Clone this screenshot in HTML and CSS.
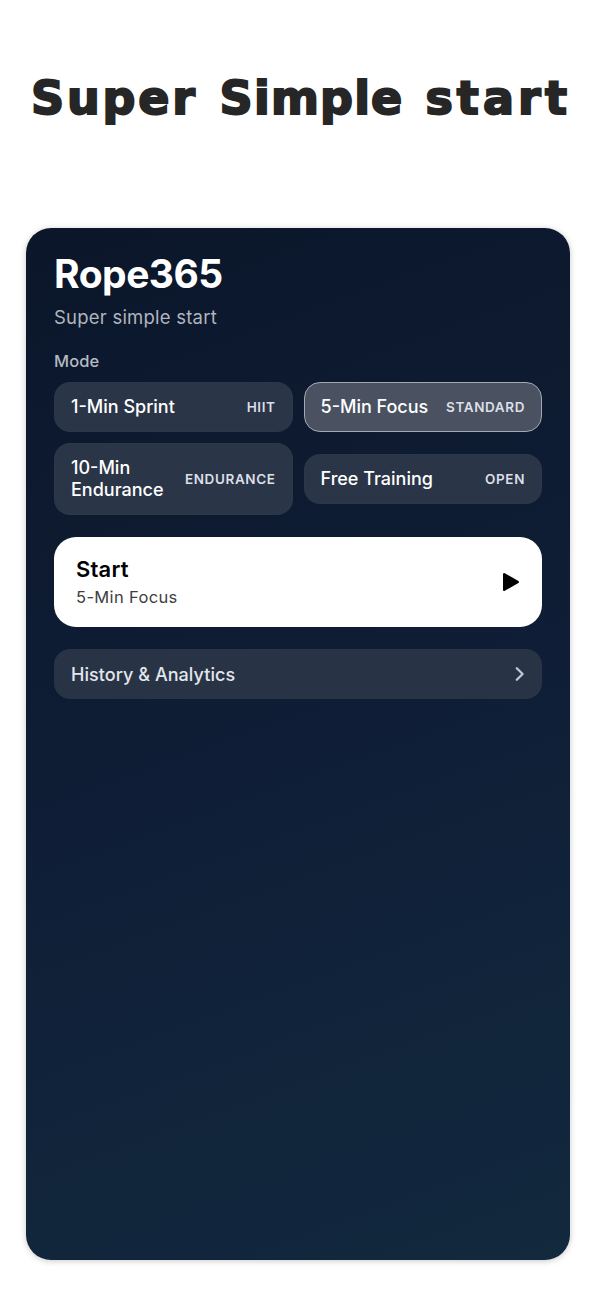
FILE: index.html
```html
<!DOCTYPE html>
<html lang="en">
<head>
    <meta charset="UTF-8">
    <meta name="viewport" content="width=device-width, initial-scale=1.0">
    <title>Rope365</title>
    <link rel="stylesheet" href="styles.css">
</head>
<body>

<header class="headline">
    <span class="word-wide">Super</span> <span class="word">Simple</span> <span class="word-widest">start</span>
</header>

<main class="screen">
    <h1>Rope365</h1>
    <p class="subtitle">Super simple start</p>

    <h2>Mode</h2>
    <div class="modes">
        <button class="mode"><span class="mode-name">1-Min Sprint</span><span class="tag">HIIT</span></button>
        <button class="mode selected"><span class="mode-name">5-Min Focus</span><span class="tag">STANDARD</span></button>
        <button class="mode tall"><span class="mode-name">10-Min<br>Endurance</span><span class="tag">ENDURANCE</span></button>
        <button class="mode"><span class="mode-name">Free Training</span><span class="tag">OPEN</span></button>
    </div>

    <button class="start">
        <span class="start-text">
            <span class="start-title">Start</span>
            <span class="start-mode">5-Min Focus</span>
        </span>
        <svg class="play" width="17" height="18" viewBox="0 0 17 18">
            <path d="M1.2 1.2L14.8 9L1.2 16.8Z" fill="#000" stroke="#000" stroke-width="2.4" stroke-linejoin="round"/>
        </svg>
    </button>

    <button class="history">
        <span>History &amp; Analytics</span>
        <svg width="10" height="16" viewBox="0 0 10 16">
            <path d="M1.8 2.2L7.6 8L1.8 13.8" fill="none" stroke="#c3c8d0" stroke-width="2.3" stroke-linecap="round" stroke-linejoin="round"/>
        </svg>
    </button>
</main>

</body>
</html>
```
FILE: styles.css
```css
* {
    box-sizing: border-box;
}

body {
    margin: 0;
    height: 1290px;
    background-color: #fff;
    font-family: Inter, "Liberation Sans", sans-serif;
    overflow: hidden;
}

.headline {
    display: flex;
    justify-content: space-between;
    height: 228px;
    padding: 70px 25px 0 31px;
    font-family: "DejaVu Sans", sans-serif;
    font-weight: bold;
    font-size: 46px;
    line-height: 56px;
    white-space: nowrap;
    color: #262626;
    -webkit-text-stroke: 2px #262626;
}

.word {
    letter-spacing: 1.2px;
}

.word-wide {
    letter-spacing: 2.8px;
}

.word-widest {
    letter-spacing: 4.1px;
}

.screen {
    display: flex;
    flex-direction: column;
    width: 544px;
    height: 1032px;
    margin: 0 26px;
    padding: 22px 28px;
    border-radius: 25px;
    background: linear-gradient(160deg, #0b162a 0%, #0f1e36 50%, #12293e 100%);
    box-shadow: 0 1px 6px rgba(0, 0, 0, 0.22);
}

h1 {
    margin: 0;
    font-size: 39px;
    font-weight: 700;
    line-height: 48px;
    letter-spacing: -0.5px;
    color: #fff;
}

.subtitle {
    margin: 7px 0 0;
    font-size: 18.5px;
    line-height: 24px;
    letter-spacing: 0.22px;
    color: #b1b5bd;
}

h2 {
    margin: 22px 0 11px;
    font-size: 16.5px;
    font-weight: 500;
    line-height: 20px;
    letter-spacing: 0.1px;
    color: #b6bac2;
}

button {
    display: flex;
    justify-content: space-between;
    align-items: center;
    border: none;
    font-family: inherit;
    text-align: left;
    cursor: pointer;
}

.modes {
    display: grid;
    grid-template-columns: 1fr 1fr;
    align-items: center;
    gap: 11px;
}

.mode {
    height: 50px;
    padding: 0 16px;
    border: 1px solid rgba(255, 255, 255, 0.01);
    border-radius: 16px;
    background-color: #2b3548;
    color: #fff;
}

.mode.selected {
    background-color: #4a5261;
    border-color: #a4a9b1;
}

.mode.tall {
    height: 72px;
}

.mode-name {
    font-size: 18px;
    font-weight: 500;
    line-height: 22px;
}

.tag {
    font-size: 13.5px;
    font-weight: 600;
    letter-spacing: 0.6px;
    color: #dcdfe6;
}

.start {
    height: 90px;
    margin-top: 22px;
    padding: 0 22px;
    border-radius: 22px;
    background-color: #fff;
    color: #000;
}

.start-text {
    display: flex;
    flex-direction: column;
    gap: 3px;
}

.start-title {
    font-size: 22px;
    font-weight: 600;
    line-height: 27px;
    letter-spacing: 0.2px;
}

.start-mode {
    font-size: 16.5px;
    line-height: 22px;
    letter-spacing: 0.35px;
    color: #404040;
}

.history {
    height: 50px;
    margin-top: 22px;
    padding: 0 17px;
    border-radius: 16px;
    background-color: #283446;
    font-size: 18px;
    font-weight: 500;
    letter-spacing: 0.05px;
    color: #e3e6ec;
}
```
